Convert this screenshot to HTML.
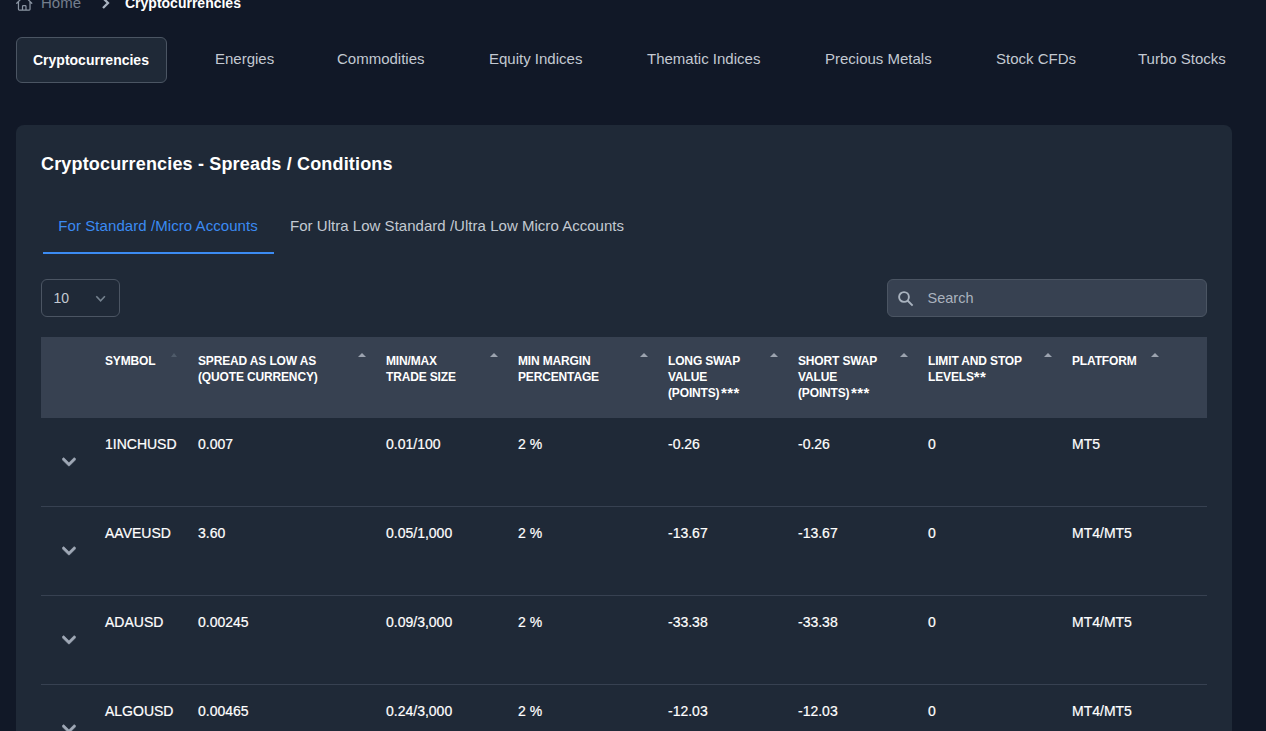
<!DOCTYPE html>
<html><head><meta charset="utf-8"><style>
*{margin:0;padding:0;box-sizing:border-box}
html,body{width:1266px;height:731px;overflow:hidden;background:#111827;font-family:"Liberation Sans",sans-serif;color:#fff}
.a{position:absolute;white-space:nowrap}
.crumb{font-size:15px;line-height:20px}
.tab{font-size:15px;line-height:20px;color:#c3c9d2}
.btn{position:absolute;left:16px;top:37px;width:151px;height:46px;background:#1f2937;border:1px solid #4b5563;border-radius:6px}
.card{position:absolute;left:16px;top:125px;width:1216px;height:700px;background:#1f2937;border-radius:8px}
.title{font-size:18px;line-height:28px;font-weight:bold;color:#fff;letter-spacing:0.17px}
.st{font-size:15px;line-height:20px}
.sel{position:absolute;left:41px;top:279px;width:79px;height:38px;border:1px solid #4b5563;border-radius:6px}
.search{position:absolute;left:887px;top:279px;width:320px;height:38px;background:#374151;border:1px solid #4b5563;border-radius:6px}
.thead{position:absolute;left:41px;top:337px;width:1166px;height:81px;background:#374151}
.th{font-size:12px;line-height:16px;font-weight:bold;color:#fff;letter-spacing:-0.15px}
.td{font-size:14px;line-height:20px;color:#fff;-webkit-text-stroke:0.2px #fff}
.rowline{position:absolute;left:41px;width:1166px;height:1px;background:#374151}
.ast{font-size:15px;line-height:0;letter-spacing:0.4px;position:relative;top:0.5px;margin-left:1.5px}
.arr{position:absolute;width:0;height:0;border-left:4px solid transparent;border-right:4px solid transparent;border-bottom:4px solid #9ca3af}
</style></head><body>
<svg class="a" style="left:15.3px;top:-6px" width="18.5" height="18.5" viewBox="0 0 24 24" fill="none" stroke="#8b95a3" stroke-width="1.6" stroke-linecap="round" stroke-linejoin="round"><path d="M2.25 12l8.954-8.955c.44-.439 1.152-.439 1.591 0L21.75 12M4.5 9.75v10.125c0 .621.504 1.125 1.125 1.125H9.75v-4.875c0-.621.504-1.125 1.125-1.125h2.25c.621 0 1.125.504 1.125 1.125V21h4.125c.621 0 1.125-.504 1.125-1.125V9.75M8.25 21h8.25"/></svg>
<div class="a crumb" style="left:41px;top:-7px;color:#747e8d">Home</div>
<svg class="a" style="left:99.8px;top:-3px" width="12" height="12" viewBox="0 0 12 12" fill="none" stroke="#a9b3c0" stroke-width="2.3"><path d="M3 1 L8 6 L3 11"/></svg>
<div class="a" style="left:125px;top:-7px;font-size:14px;line-height:20px;color:#fff;font-weight:bold">Cryptocurrencies</div>
<div class="btn"></div>
<div class="a" style="left:33px;top:50px;font-size:14px;line-height:20px;font-weight:bold;color:#fff">Cryptocurrencies</div>
<div class="a tab" style="left:215px;top:49px">Energies</div>
<div class="a tab" style="left:337px;top:49px">Commodities</div>
<div class="a tab" style="left:489px;top:49px">Equity Indices</div>
<div class="a tab" style="left:647px;top:49px">Thematic Indices</div>
<div class="a tab" style="left:825px;top:49px">Precious Metals</div>
<div class="a tab" style="left:996px;top:49px">Stock CFDs</div>
<div class="a tab" style="left:1138px;top:49px">Turbo Stocks</div>
<div class="card"></div>
<div class="a title" style="left:41px;top:150px">Cryptocurrencies - Spreads / Conditions</div>
<div class="a st" style="left:58.3px;top:216px;color:#3b8bf3;letter-spacing:0.07px">For Standard /Micro Accounts</div>
<div class="a" style="left:43px;top:252px;width:231px;height:2px;background:#3b8bf3"></div>
<div class="a st" style="left:290px;top:216px;color:#c3c9d2;letter-spacing:0.03px">For Ultra Low Standard /Ultra Low Micro Accounts</div>
<div class="sel"></div>
<div class="a" style="left:53.5px;top:288px;font-size:14px;line-height:20px;color:#c3c9d2">10</div>
<svg class="a" style="left:94px;top:292px" width="13" height="13" viewBox="0 0 13 13" fill="none" stroke="#75828f" stroke-width="1.6"><path d="M2.3 4.3 L6.6 8.8 L10.9 4.3"/></svg>
<div class="search"></div>
<svg class="a" style="left:897px;top:289.8px" width="18" height="18" viewBox="0 0 18 18" fill="none" stroke="#a9b3bf" stroke-width="1.9"><circle cx="7" cy="7" r="4.9"/><path d="M10.5 10.5 L15.6 15.6"/></svg>
<div class="a" style="left:927.5px;top:287.6px;font-size:14.5px;line-height:20px;color:#aab2be">Search</div>
<div class="thead"></div>
<div class="a th" style="left:105px;top:353px">SYMBOL</div>
<div class="a th" style="left:198px;top:353px">SPREAD AS LOW AS<br>(QUOTE CURRENCY)</div>
<div class="a th" style="left:386px;top:353px">MIN/MAX<br>TRADE SIZE</div>
<div class="a th" style="left:518px;top:353px">MIN MARGIN<br>PERCENTAGE</div>
<div class="a th" style="left:668px;top:353px">LONG SWAP<br>VALUE<br>(POINTS)<span class=ast>***</span></div>
<div class="a th" style="left:798px;top:353px">SHORT SWAP<br>VALUE<br>(POINTS)<span class=ast>***</span></div>
<div class="a th" style="left:928px;top:353px">LIMIT AND STOP<br>LEVELS<span class=ast style=margin-left:0>**</span></div>
<div class="a th" style="left:1072px;top:353px">PLATFORM</div>
<div class="arr" style="left:171px;top:353px;border-left-width:3px;border-right-width:3px;border-bottom-color:#4f5b6a"></div>
<div class="arr" style="left:358px;top:353px"></div>
<div class="arr" style="left:490px;top:353px"></div>
<div class="arr" style="left:640px;top:353px"></div>
<div class="arr" style="left:770px;top:353px"></div>
<div class="arr" style="left:900px;top:353px"></div>
<div class="arr" style="left:1044px;top:353px"></div>
<div class="arr" style="left:1151px;top:353px"></div>
<div class="a td" style="left:105px;top:434px">1INCHUSD</div>
<div class="a td" style="left:198px;top:434px">0.007</div>
<div class="a td" style="left:386px;top:434px">0.01/100</div>
<div class="a td" style="left:518px;top:434px">2 %</div>
<div class="a td" style="left:668px;top:434px">-0.26</div>
<div class="a td" style="left:798px;top:434px">-0.26</div>
<div class="a td" style="left:928px;top:434px">0</div>
<div class="a td" style="left:1072px;top:434px">MT5</div>
<svg class="a" style="left:61.9px;top:454px" width="13.93" height="15.92" viewBox="0 0 448 512"><path fill="#9fa8b6" stroke="#9fa8b6" stroke-width="22" stroke-linejoin="miter" d="M207.029 381.476L12.686 187.132c-9.373-9.373-9.373-24.569 0-33.941l22.667-22.667c9.357-9.357 24.522-9.375 33.901-.04L224 284.505l154.745-154.021c9.379-9.335 24.544-9.317 33.901.04l22.667 22.667c9.373 9.373 9.373 24.569 0 33.941L240.971 381.476c-9.373 9.372-24.569 9.372-33.942 0z"/></svg>
<div class="rowline" style="top:506px"></div>
<div class="a td" style="left:105px;top:523px">AAVEUSD</div>
<div class="a td" style="left:198px;top:523px">3.60</div>
<div class="a td" style="left:386px;top:523px">0.05/1,000</div>
<div class="a td" style="left:518px;top:523px">2 %</div>
<div class="a td" style="left:668px;top:523px">-13.67</div>
<div class="a td" style="left:798px;top:523px">-13.67</div>
<div class="a td" style="left:928px;top:523px">0</div>
<div class="a td" style="left:1072px;top:523px">MT4/MT5</div>
<svg class="a" style="left:61.9px;top:543px" width="13.93" height="15.92" viewBox="0 0 448 512"><path fill="#9fa8b6" stroke="#9fa8b6" stroke-width="22" stroke-linejoin="miter" d="M207.029 381.476L12.686 187.132c-9.373-9.373-9.373-24.569 0-33.941l22.667-22.667c9.357-9.357 24.522-9.375 33.901-.04L224 284.505l154.745-154.021c9.379-9.335 24.544-9.317 33.901.04l22.667 22.667c9.373 9.373 9.373 24.569 0 33.941L240.971 381.476c-9.373 9.372-24.569 9.372-33.942 0z"/></svg>
<div class="rowline" style="top:595px"></div>
<div class="a td" style="left:105px;top:612px">ADAUSD</div>
<div class="a td" style="left:198px;top:612px">0.00245</div>
<div class="a td" style="left:386px;top:612px">0.09/3,000</div>
<div class="a td" style="left:518px;top:612px">2 %</div>
<div class="a td" style="left:668px;top:612px">-33.38</div>
<div class="a td" style="left:798px;top:612px">-33.38</div>
<div class="a td" style="left:928px;top:612px">0</div>
<div class="a td" style="left:1072px;top:612px">MT4/MT5</div>
<svg class="a" style="left:61.9px;top:632px" width="13.93" height="15.92" viewBox="0 0 448 512"><path fill="#9fa8b6" stroke="#9fa8b6" stroke-width="22" stroke-linejoin="miter" d="M207.029 381.476L12.686 187.132c-9.373-9.373-9.373-24.569 0-33.941l22.667-22.667c9.357-9.357 24.522-9.375 33.901-.04L224 284.505l154.745-154.021c9.379-9.335 24.544-9.317 33.901.04l22.667 22.667c9.373 9.373 9.373 24.569 0 33.941L240.971 381.476c-9.373 9.372-24.569 9.372-33.942 0z"/></svg>
<div class="rowline" style="top:684px"></div>
<div class="a td" style="left:105px;top:701px">ALGOUSD</div>
<div class="a td" style="left:198px;top:701px">0.00465</div>
<div class="a td" style="left:386px;top:701px">0.24/3,000</div>
<div class="a td" style="left:518px;top:701px">2 %</div>
<div class="a td" style="left:668px;top:701px">-12.03</div>
<div class="a td" style="left:798px;top:701px">-12.03</div>
<div class="a td" style="left:928px;top:701px">0</div>
<div class="a td" style="left:1072px;top:701px">MT4/MT5</div>
<svg class="a" style="left:61.9px;top:721px" width="13.93" height="15.92" viewBox="0 0 448 512"><path fill="#9fa8b6" stroke="#9fa8b6" stroke-width="22" stroke-linejoin="miter" d="M207.029 381.476L12.686 187.132c-9.373-9.373-9.373-24.569 0-33.941l22.667-22.667c9.357-9.357 24.522-9.375 33.901-.04L224 284.505l154.745-154.021c9.379-9.335 24.544-9.317 33.901.04l22.667 22.667c9.373 9.373 9.373 24.569 0 33.941L240.971 381.476c-9.373 9.372-24.569 9.372-33.942 0z"/></svg>
</body></html>
